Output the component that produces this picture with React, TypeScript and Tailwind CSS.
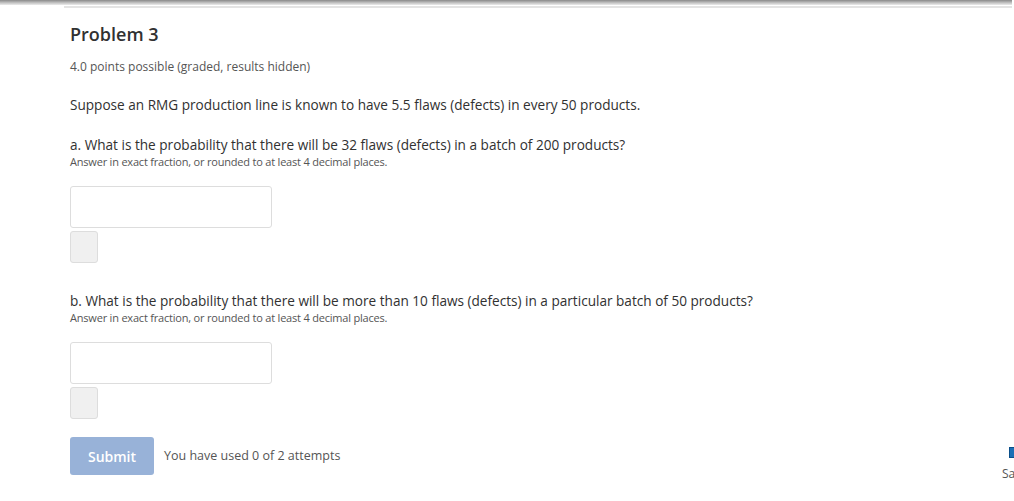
import React from 'react';

function AnswerBlock({ question }: { question: string }) {
  return (
    <div>
      <p className="text-[13.6px] leading-[18px] text-[#313131]">{question}</p>
      <p className="text-[11px] leading-[15px] text-[#555] tracking-[-0.2px]">
        Answer in exact fraction, or rounded to at least 4 decimal places.
      </p>
      <div className="mt-[17px] w-[202px] h-[42px] rounded-[3px] border border-[#ddd] bg-white" />
      <div className="mt-[3px] w-[28px] h-[32px] rounded-[3px] border border-[#ddd] bg-[#f0f0f0]" />
    </div>
  );
}

export default function App() {
  return (
    <div className="relative w-[1014px] h-[501px] overflow-hidden bg-white" style={{ fontFamily: '"Open Sans", sans-serif' }}>
      <div className="h-[5px] w-[1012px] bg-gradient-to-b from-[#8a8a8a] via-[#bdbdbd] to-[#ececec]" />
      <div className="ml-[64px] mt-[1px] h-[2px] w-[948px] bg-[#e4e4e4]" />

      <div className="pl-[70px] pt-[14px]">
        <h2 className="text-[18px] leading-[24px] font-semibold text-[#313131]">Problem 3</h2>
        <p className="mt-[13px] text-[12px] leading-[16px] text-[#555]">4.0 points possible (graded, results hidden)</p>

        <p className="mt-[21px] text-[13.6px] leading-[18px] text-[#313131]">
          Suppose an RMG production line is known to have 5.5 flaws (defects) in every 50 products.
        </p>

        <div className="mt-[22px]">
          <AnswerBlock question="a. What is the probability that there will be 32 flaws (defects) in a batch of 200 products?" />
        </div>

        <div className="mt-[29px]">
          <AnswerBlock question="b. What is the probability that there will be more than 10 flaws (defects) in a particular batch of 50 products?" />
        </div>

        <div className="mt-[18px] flex items-center gap-[10px]">
          <button className="w-[84px] h-[38px] rounded-[3px] bg-[#98b2d8] text-white text-[14px] font-semibold">Submit</button>
          <span className="text-[12.5px] text-[#555]">You have used 0 of 2 attempts</span>
        </div>
      </div>

      <div className="absolute left-[1009px] top-[447px] w-[10px] h-[11px] bg-[#1d6fb5] border border-[#0b4f8a]" />
      <span className="absolute left-[1002px] top-[465px] text-[12px] text-[#555]">Sa</span>
    </div>
  );
}
